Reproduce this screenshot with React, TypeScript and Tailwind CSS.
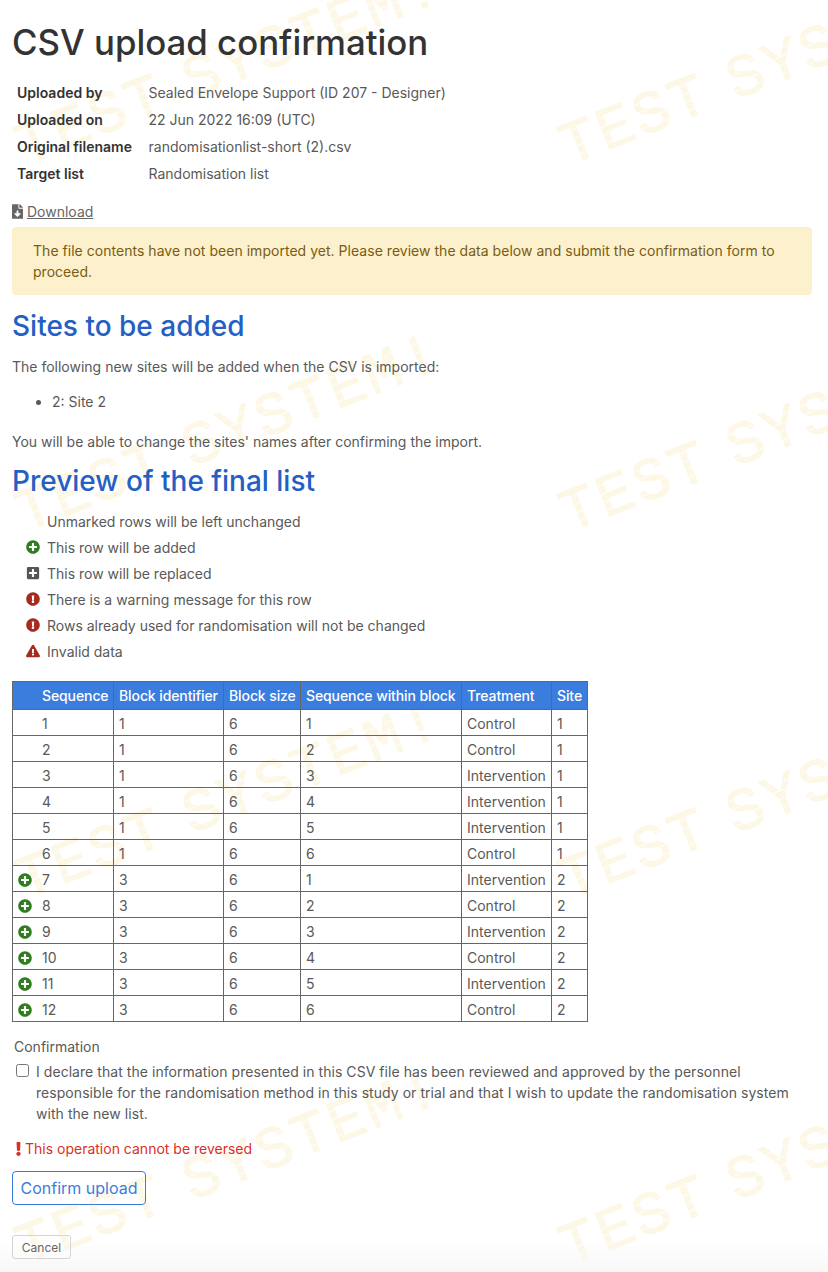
import React from "react";
import { FaPlusCircle, FaPlusSquare, FaExclamationCircle, FaExclamationTriangle, FaFileDownload, FaExclamation } from "react-icons/fa";

const marks: [number, number][] = [];
for (const y of [-237, 130, 497, 864, 1231]) for (const x of [11, 555]) marks.push([x, y]);

function Watermark() {
  return (
    <svg className="absolute left-0 top-0 pointer-events-none" width="828" height="1272" aria-hidden="true">
      <defs>
        <pattern id="dots" width="7" height="39" patternUnits="userSpaceOnUse">
          <rect y="0" width="7" height="6.5" fill="#fdf7e6" />
          <rect y="7.5" width="7" height="7.5" fill="#fdf7e6" />
          <rect y="16" width="7" height="7" fill="#fdf7e6" />
          <rect y="24" width="7" height="7.5" fill="#fdf7e6" />
          <rect y="32.5" width="7" height="6.5" fill="#fdf7e6" />
        </pattern>
      </defs>
      {marks.map(([x, y]) => (
        <text
          key={`${x}-${y}`}
          transform={`translate(${x} ${y}) rotate(-21.5) translate(0 38)`}
          fontFamily="'Liberation Mono', monospace"
          fontSize="60"
          letterSpacing="3"
          wordSpacing="-16"
          fill="url(#dots)"
          stroke="url(#dots)"
          strokeWidth="1.2"
          strokeLinejoin="round"
        >
          TEST SYSTEM!
        </text>
      ))}
    </svg>
  );
}

const meta = [
  ["Uploaded by", "Sealed Envelope Support (ID 207 - Designer)"],
  ["Uploaded on", "22 Jun 2022 16:09 (UTC)"],
  ["Original filename", "randomisationlist-short (2).csv"],
  ["Target list", "Randomisation list"],
];

const rows: [number, number, number, string, number, boolean][] = [
  [1, 1, 1, "Control", 1, false],
  [2, 1, 2, "Control", 1, false],
  [3, 1, 3, "Intervention", 1, false],
  [4, 1, 4, "Intervention", 1, false],
  [5, 1, 5, "Intervention", 1, false],
  [6, 1, 6, "Control", 1, false],
  [7, 3, 1, "Intervention", 2, true],
  [8, 3, 2, "Control", 2, true],
  [9, 3, 3, "Intervention", 2, true],
  [10, 3, 4, "Control", 2, true],
  [11, 3, 5, "Intervention", 2, true],
  [12, 3, 6, "Control", 2, true],
];

const legend: [React.ReactNode, string][] = [
  [null, "Unmarked rows will be left unchanged"],
  [<FaPlusCircle className="text-[#2f7d1f] text-[14px]" />, "This row will be added"],
  [<FaPlusSquare className="text-[#555555] text-[14px]" />, "This row will be replaced"],
  [<FaExclamationCircle className="text-[#a52a20] text-[14px]" />, "There is a warning message for this row"],
  [<FaExclamationCircle className="text-[#a52a20] text-[14px]" />, "Rows already used for randomisation will not be changed"],
  [<FaExclamationTriangle className="text-[#a52a20] text-[14px]" />, "Invalid data"],
];

const td = "border border-[#666666] px-[5px] h-[26px] pt-[2px] pb-0 font-normal";
const th = "border border-[#666666] px-[5px] h-[28px] py-0 font-medium tracking-[-0.1px] text-left text-white whitespace-nowrap";

export default function App() {
  return (
    <div className="relative h-[1272px] w-[828px] overflow-hidden bg-white font-['Inter','Liberation_Sans',sans-serif] text-[14px] leading-[21px] text-[#595959]">
      <Watermark />
      <div className="absolute left-0 bottom-0 h-[30px] w-full bg-gradient-to-b from-transparent to-[#f7f7f7]" />
      <div className="relative px-3 pt-[19px]">
        <h1 className="text-[34.8px] leading-[46px] font-medium text-[#333333]">CSV upload confirmation</h1>

        <div className="mt-[14px] ml-[5px] grid grid-cols-[131.5px_1fr]">
          {meta.map(([k, v]) => (
            <React.Fragment key={k}>
              <div className="h-[27px] leading-[27px] font-semibold text-[#333333]">{k}</div>
              <div className="h-[27px] leading-[27px]">{v}</div>
            </React.Fragment>
          ))}
        </div>

        <div className="mt-[14px] flex h-[21px] items-center gap-[4px] text-[#666666]">
          <FaFileDownload className="h-[15px] w-[11px]" />
          <span className="underline">Download</span>
        </div>

        <div className="mt-[5px] h-[68px] w-[800px] rounded-[4px] border border-[#fbeec8] bg-[#fcf0cd] px-5 py-3 tracking-[0.03px] text-[#7a5c12]">
          The file contents have not been imported yet. Please review the data below and submit the confirmation form to proceed.
        </div>

        <h2 className="mt-[13px] text-[28px] leading-[36px] font-medium text-[#2460c4]">Sites to be added</h2>
        <p className="mt-[12px]">The following new sites will be added when the CSV is imported:</p>
        <ul className="mt-[14px] list-disc pl-10">
          <li>2: Site 2</li>
        </ul>
        <p className="mt-[19px]">You will be able to change the sites' names after confirming the import.</p>

        <h2 className="mt-[11px] text-[28px] leading-[36px] font-medium text-[#2460c4]">Preview of the final list</h2>

        <div className="mt-[9px] flex flex-col">
          {legend.map(([icon, label]) => (
            <div key={label} className="flex h-[26px] items-center">
              <span className="ml-[12px] mr-[5px] flex w-[18px] justify-center">{icon}</span>
              <span>{label}</span>
            </div>
          ))}
        </div>

        <table className="mt-[17px] w-[575px] table-fixed border-collapse">
          <thead>
            <tr className="bg-[#3b7ddd]">
              <th className={`${th} w-[101px] pl-[29px]`}>Sequence</th>
              <th className={`${th} w-[110px]`}>Block identifier</th>
              <th className={`${th} w-[77px]`}>Block size</th>
              <th className={`${th} w-[161px]`}>Sequence within block</th>
              <th className={`${th} w-[90px]`}>Treatment</th>
              <th className={`${th} w-[36px]`}>Site</th>
            </tr>
          </thead>
          <tbody>
            {rows.map(([seq, block, within, treat, site, added]) => (
              <tr key={seq}>
                <td className={td}>
                  <div className="flex items-center">
                    <span className="flex w-[24px] shrink-0 items-center">
                      {added && <FaPlusCircle className="text-[14px] text-[#2f7d1f]" />}
                    </span>
                    <span>{seq}</span>
                  </div>
                </td>
                <td className={td}>{block}</td>
                <td className={td}>6</td>
                <td className={td}>{within}</td>
                <td className={td}>{treat}</td>
                <td className={td}>{site}</td>
              </tr>
            ))}
          </tbody>
        </table>

        <div className="mt-[14px] ml-[2px]">Confirmation</div>
        <label className="mt-[4px] flex w-[790px]">
          <span className="flex w-[24px] shrink-0 pl-[4px] pt-[3px]">
            <input type="checkbox" className="h-[13px] w-[13px]" />
          </span>
          <span className="tracking-[0.05px]">
            I declare that the information presented in this CSV file has been reviewed and approved by the personnel responsible for the randomisation method in this study or trial and that I wish to update the randomisation system with the new list.
          </span>
        </label>

        <div className="mt-[14px] flex h-[21px] items-center text-[#dc2f26]">
          <FaExclamation className="ml-[1px] mr-[1px] h-[14px] w-[11px]" />
          <span>This operation cannot be reversed</span>
        </div>

        <button className="mt-[12px] block h-[34px] w-[134px] rounded-[4px] border border-[#3b7ddd] text-center text-[16px] text-[#3b7ddd]">
          Confirm upload
        </button>
        <button className="mt-[30px] block h-[24px] w-[59px] rounded-[3px] border border-[#d5d5d5] text-center text-[12px] text-[#666666]">
          Cancel
        </button>
      </div>
    </div>
  );
}
